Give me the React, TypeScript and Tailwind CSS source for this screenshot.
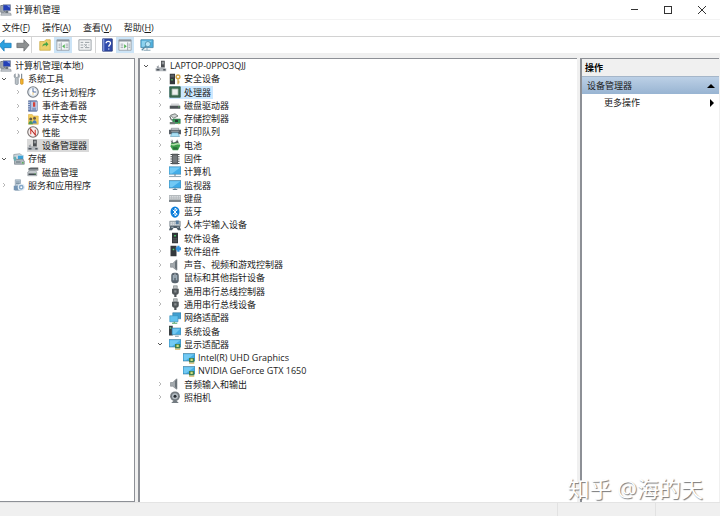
import React from "react";

type IconName =
  | "app" | "tools" | "clock" | "event" | "share" | "perf" | "pc" | "storage" | "drive" | "services"
  | "security" | "cpu" | "disk" | "controller" | "printer" | "battery" | "firmware" | "computer"
  | "monitor" | "keyboard" | "bluetooth" | "hid" | "device" | "component" | "speaker" | "mouse"
  | "usb" | "network" | "system" | "display" | "camera";

const art: Record<IconName, React.ReactNode> = {
  app: (
    <>
      <path d="M1 2h5v9H1z" fill="#aeb4b9" stroke="#59636d" />
      <path d="M4 1h10v8H4z" fill="#2440b8" stroke="#8a929a" />
      <path d="M9 2h4v3z" fill="#8ba6f0" />
      <path d="M2 12h12l1 3H1z" fill="#c6cbd0" stroke="#757d85" strokeWidth=".7" />
      <path d="M7 9h4v3H7z" fill="#6a737c" />
    </>
  ),
  tools: (
    <>
      <path d="M3 1v4l2 1 2-1V1c2 1 2 5 0 6v7c0 2-4 2-4 0V7C1 6 1 2 3 1z" fill="#b9c1c7" stroke="#747e86" strokeWidth=".8" />
      <path d="M11.5 1v7" stroke="#7b858d" strokeWidth="1.5" />
      <path d="M10 8h3.500v6c0 1.500-3.500 1.500-3.500 0z" fill="#f1b32d" stroke="#c27f16" strokeWidth=".8" />
    </>
  ),
  clock: (
    <>
      <circle cx="8" cy="8" r="7" fill="#e3ebf3" stroke="#777e86" strokeWidth="1.5" />
      <circle cx="8" cy="8" r="5" fill="#fff" stroke="#c4cdd6" strokeWidth=".6" />
      <path d="M8 3v5h4" fill="none" stroke="#4a69a0" strokeWidth="1.3" />
      <path d="M8 8v4" stroke="#e2ba63" />
    </>
  ),
  event: (
    <>
      <path d="M2 1h11v14H2z" fill="#5d79b5" stroke="#4b5f8c" strokeWidth=".8" />
      <path d="M5 2h9v12H5z" fill="#b9c7e4" stroke="#7888ab" strokeWidth=".7" />
      <path d="M8 3h3v6H8z" fill="#d3423c" />
      <path d="M7 11h5M7 13h5" stroke="#6278a5" />
      <path d="M1 3h3M1 6h3M1 9h3M1 12h3" stroke="#e8edf3" />
    </>
  ),
  share: (
    <>
      <path d="M2 2h5l1 2h7v11H2z" fill="#f3ce5b" stroke="#d6a63a" strokeWidth=".7" />
      <circle cx="5" cy="8" r="2" fill="#635c48" />
      <circle cx="10" cy="7" r="2" fill="#705c42" />
      <path d="M2 15c0-6 6-6 6 0z" fill="#4c9a57" />
      <path d="M7 14c0-6 6-6 6 0z" fill="#497fb9" />
    </>
  ),
  perf: (
    <>
      <circle cx="8" cy="8" r="7" fill="#f7eeee" stroke="#77716f" strokeWidth="1.5" />
      <path d="M5 11V4l6 8V5" fill="none" stroke="#d9463e" strokeWidth="1.5" />
      <path d="M4 4l8 8" stroke="#812923" strokeWidth=".7" />
    </>
  ),
  pc: (
    <>
      <path d="M8 1h5v9H8z" fill="#4b4e52" />
      <path d="M9 3h3M9 5h3" stroke="#ccd0d4" />
      <path d="M2 9l3-2v3h8v2H3v2H1v-3h2z" fill="#9a9fa5" />
      <path d="M1 11h14v4H1z" fill="#b4b9be" />
      <path d="M2 12h4v2H2zM11 12h3v2h-3z" fill="#4e555c" />
    </>
  ),
  storage: (
    <>
      <path d="M1 2l8-1 3 2v5H1z" fill="#c9d4da" stroke="#7b8991" strokeWidth=".8" />
      <path d="M6 3h8v6H6z" fill="#3aa3d9" stroke="#d8e0e5" />
      <path d="M2 9l11-1 2 3v4H2z" fill="#aeb7bd" stroke="#65727b" strokeWidth=".8" />
      <path d="M4 12h6" stroke="#4e5d66" />
      <path d="M12 12h2v2h-2z" fill="#57b854" />
      <path d="M1 5h3v5H1z" fill="#66aeb3" />
    </>
  ),
  drive: (
    <>
      <path d="M2 3l3-1h10v4H2z" fill="#5a6065" />
      <path d="M3 5h12" stroke="#a9b0b5" />
      <path d="M1 8l3-2h7l2 2v5H1z" fill="#c3c8cc" stroke="#7d848a" strokeWidth=".7" />
      <path d="M2 10h10v2H2z" fill="#41484e" />
      <path d="M10 10h2v1h-2z" fill="#6cc367" />
    </>
  ),
  services: (
    <>
      <path d="M3 1h7v14H3z" fill="#b9c9d6" stroke="#8698a7" strokeWidth=".8" />
      <path d="M4 4h5M4 6h5" stroke="#6d8497" />
      <path d="M1 9h9v6H1z" fill="#7495b5" />
      <circle cx="11" cy="11" r="4" fill="#82a6c8" stroke="#e3edf5" strokeWidth="1.5" />
      <circle cx="11" cy="11" r="1.3" fill="#fff" />
    </>
  ),
  security: (
    <>
      <path d="M1 1h7v14H1z" fill="#34383b" />
      <path d="M2 3h5M2 5h5" stroke="#767c80" />
      <path d="M3 8h2v2H3z" fill="#55b75b" />
      <circle cx="12" cy="5" r="2.5" fill="none" stroke="#d3a646" strokeWidth="2" />
      <path d="M12 7v8M12 11h2M12 13h2" stroke="#d3a646" strokeWidth="1.5" />
    </>
  ),
  cpu: (
    <>
      <path d="M1 1h14v14H1z" fill="#3e6d52" stroke="#29553c" />
      <path d="M4 4h8v8H4z" fill="#eef1ef" stroke="#a3b8aa" />
    </>
  ),
  disk: (
    <>
      <path d="M3 6h10l2 4H1z" fill="#d5d7d9" />
      <path d="M1 9h14v4H1z" fill="#4d5256" />
      <path d="M12 10h2v1h-2z" fill="#62c564" />
    </>
  ),
  controller: (
    <>
      <path d="M2 3l6-2 4 3-6 3z" fill="#d0d4d4" stroke="#555f5b" />
      <path d="M1 4l2 5 5 1" fill="none" stroke="#626c67" strokeWidth="1.5" />
      <path d="M5 8h10v6H5z" fill="#369957" stroke="#246c3f" strokeWidth=".7" />
      <path d="M8 9h4v3H8z" fill="#293c31" />
      <path d="M1 12h7v3H1z" fill="#737a77" />
      <path d="M12 14h2v1h-2z" fill="#dcb546" />
    </>
  ),
  printer: (
    <>
      <path d="M3 3h10v3H3z" fill="#d6dadd" stroke="#656d73" strokeWidth=".7" />
      <path d="M0 5h16v6H0z" fill="#565e65" />
      <path d="M3 7h10" stroke="#b4bdc3" />
      <path d="M4 9h8l2 5H2z" fill="#a8dff4" stroke="#4f8ca8" strokeWidth=".7" />
    </>
  ),
  battery: (
    <>
      <path d="M2 2l4 3 6-3 1 4H4z" fill="#52595b" />
      <path d="M3 5h10l2 4-3 6H5l-3-5z" fill="#3c9c4b" />
      <path d="M3 7c4 3 7-3 11 0" fill="none" stroke="#b3dfaa" strokeWidth="2" />
      <path d="M4 1l1 5M11 1l-1 4" stroke="#596466" />
      <path d="M5 11h6l1 3H6z" fill="#286d38" />
    </>
  ),
  firmware: (
    <>
      <path d="M4 1h8v14H4z" fill="#54575a" />
      <path d="M5 3h6v10H5z" fill="#74787b" />
      <path d="M2 2h2M2 5h2M2 8h2M2 11h2M2 14h2M12 2h2M12 5h2M12 8h2M12 11h2M12 14h2" stroke="#45494c" strokeWidth="1.5" />
    </>
  ),
  computer: (
    <>
      <path d="M0 1h16v10H0z" fill="#43aee9" stroke="#4c8aad" strokeWidth=".8" />
      <path d="M1 2h14L4 10H1z" fill="#75cbf6" />
      <path d="M7 11h2v2H7z" fill="#718897" />
      <path d="M0 14h16" stroke="#93a9b7" strokeWidth="1.5" />
    </>
  ),
  monitor: (
    <>
      <path d="M0 2h16v10H0z" fill="#40abe7" stroke="#477e9b" strokeWidth=".8" />
      <path d="M1 3h14L4 11H1z" fill="#72c9f4" />
      <path d="M5 14h6M8 12v2" stroke="#597d92" strokeWidth="1.3" />
    </>
  ),
  keyboard: (
    <>
      <path d="M0 4h16v9H0z" fill="#b5babd" />
      <path d="M1 6h14M1 8h14" stroke="#e4e7e9" strokeDasharray="2 1" />
      <path d="M0 12h16" stroke="#697076" strokeWidth="2" />
    </>
  ),
  bluetooth: (
    <>
      <ellipse cx="8" cy="8" rx="6" ry="7.5" fill="#087cda" />
      <path d="M5 5l6 6-3 2V3l3 2-6 6" fill="none" stroke="#fff" strokeWidth="1.3" />
    </>
  ),
  hid: (
    <>
      <path d="M1 3h14v7H1z" fill="#b3bbc0" stroke="#69747c" strokeWidth=".8" />
      <path d="M2 5h12M2 7h12" stroke="#f1f3f4" strokeDasharray="2 1" />
      <path d="M9 2h4v5H9z" fill="#597c9d" />
      <path d="M2 9h12l2 6h-4l-2-3H6l-2 3H0z" fill="#4c5a65" />
      <path d="M3 11h3M11 11h2" stroke="#d4e1eb" />
    </>
  ),
  device: (
    <>
      <path d="M4 1h8v14H4z" fill="#303438" />
      <path d="M5 9h6M5 11h6M5 13h6" stroke="#74797d" strokeWidth=".7" />
      <path d="M7 4h2v2H7z" fill="#49df69" />
    </>
  ),
  component: (
    <>
      <path d="M2 1h8v14H2z" fill="#34383c" />
      <path d="M5 5h2v2H5z" fill="#52d56c" />
      <path d="M9 3h2V1h3v2h2v4h-2v2h-3V7H9z" fill="#3492dc" />
    </>
  ),
  speaker: (
    <>
      <path d="M2 6h3l5-5v14l-5-4H2z" fill="#a3a9ad" stroke="#7b8287" strokeWidth=".8" />
      <path d="M8 4l3-3v14l-3-3z" fill="#6b7379" />
    </>
  ),
  mouse: (
    <>
      <rect x="3" y="1" width="10" height="14" rx="4" fill="#59646e" />
      <path d="M5 4h2v7H5zM9 4h2v7H9z" fill="#9aabb8" />
      <path d="M8 2v6" stroke="#e0e9ef" />
    </>
  ),
  usb: (
    <>
      <path d="M6 1h5v4H6z" fill="#bdc1c3" stroke="#666c6f" strokeWidth=".7" />
      <path d="M4 5h9v5c0 2-2 3-3 3v3H7v-3c-1 0-3-1-3-3z" fill="#505659" />
      <path d="M7 7h3v3H7z" fill="#898f92" />
    </>
  ),
  network: (
    <>
      <path d="M5 1h11v8H5z" fill="#409fd1" stroke="#357b9f" strokeWidth=".8" />
      <path d="M1 5h11v8H1z" fill="#61c1ee" stroke="#378eb8" strokeWidth=".8" />
      <path d="M4 15h7M7 13v2" stroke="#54a76a" strokeWidth="1.5" />
    </>
  ),
  system: (
    <>
      <path d="M0 1h5v13H0z" fill="#393e43" />
      <path d="M4 4h12v9H4z" fill="#43ace3" stroke="#457d99" strokeWidth=".8" />
      <path d="M5 5h10l-7 7H5z" fill="#72c8f1" />
      <path d="M8 15h5" stroke="#607e8e" />
      <path d="M1 3h2v2H1z" fill="#61cd7c" />
    </>
  ),
  display: (
    <>
      <path d="M0 2h16v10H0z" fill="#43ade5" stroke="#447a94" strokeWidth=".8" />
      <path d="M1 3h14L4 11H1z" fill="#73caf3" />
      <path d="M8 8h7v6H8z" fill="#407e4c" />
      <path d="M10 9h3v3h-3z" fill="#d2dd80" />
      <path d="M8 15h7" stroke="#ca9f2d" />
    </>
  ),
  camera: (
    <>
      <circle cx="8" cy="7" r="6.5" fill="#747b80" />
      <circle cx="8" cy="7" r="4" fill="#b5bdc3" />
      <circle cx="8" cy="7" r="2" fill="#252b30" />
      <path d="M3 16l3-3h4l3 3z" fill="#737b81" />
    </>
  ),
};

function Icon({ name }: { name: IconName }) {
  return (
    <svg viewBox="0 0 16 16" className="h-3 w-3 shrink-0" aria-hidden="true">
      {art[name]}
    </svg>
  );
}

function Chevron({ open }: { open?: boolean }) {
  return (
    <svg viewBox="0 0 6 6" className="h-1.5 w-1.5 shrink-0" fill="none" aria-hidden="true">
      {open === undefined ? null : open ? (
        <path d="M1 2l2 2 2-2" stroke="#555" />
      ) : (
        <path d="M2 1l2 2-2 2" stroke="#a6a6a6" strokeWidth=".8" />
      )}
    </svg>
  );
}

type Node = { label: string; icon: IconName; level: number; open?: boolean; tone?: "grey" | "blue" };

const consoleTree: Node[] = [
  { label: "计算机管理(本地)", icon: "app", level: 0 },
  { label: "系统工具", icon: "tools", level: 1, open: true },
  { label: "任务计划程序", icon: "clock", level: 2, open: false },
  { label: "事件查看器", icon: "event", level: 2, open: false },
  { label: "共享文件夹", icon: "share", level: 2, open: false },
  { label: "性能", icon: "perf", level: 2, open: false },
  { label: "设备管理器", icon: "pc", level: 2, tone: "grey" },
  { label: "存储", icon: "storage", level: 1, open: true },
  { label: "磁盘管理", icon: "drive", level: 2 },
  { label: "服务和应用程序", icon: "services", level: 1, open: false },
];

const deviceTree: Node[] = [
  { label: "LAPTOP-0PPO3QJJ", icon: "pc", level: 1, open: true },
  { label: "安全设备", icon: "security", level: 2, open: false },
  { label: "处理器", icon: "cpu", level: 2, open: false, tone: "blue" },
  { label: "磁盘驱动器", icon: "disk", level: 2, open: false },
  { label: "存储控制器", icon: "controller", level: 2, open: false },
  { label: "打印队列", icon: "printer", level: 2, open: false },
  { label: "电池", icon: "battery", level: 2, open: false },
  { label: "固件", icon: "firmware", level: 2, open: false },
  { label: "计算机", icon: "computer", level: 2, open: false },
  { label: "监视器", icon: "monitor", level: 2, open: false },
  { label: "键盘", icon: "keyboard", level: 2, open: false },
  { label: "蓝牙", icon: "bluetooth", level: 2, open: false },
  { label: "人体学输入设备", icon: "hid", level: 2, open: false },
  { label: "软件设备", icon: "device", level: 2, open: false },
  { label: "软件组件", icon: "component", level: 2, open: false },
  { label: "声音、视频和游戏控制器", icon: "speaker", level: 2, open: false },
  { label: "鼠标和其他指针设备", icon: "mouse", level: 2, open: false },
  { label: "通用串行总线控制器", icon: "usb", level: 2, open: false },
  { label: "通用串行总线设备", icon: "usb", level: 2, open: false },
  { label: "网络适配器", icon: "network", level: 2, open: false },
  { label: "系统设备", icon: "system", level: 2, open: false },
  { label: "显示适配器", icon: "display", level: 2, open: true },
  { label: "Intel(R) UHD Graphics", icon: "display", level: 3 },
  { label: "NVIDIA GeForce GTX 1650", icon: "display", level: 3 },
  { label: "音频输入和输出", icon: "speaker", level: 2, open: false },
  { label: "照相机", icon: "camera", level: 2, open: false },
];

const indent = ["-ml-3", "pl-px", "pl-[15px]", "pl-[29px]"];

function Tree({ nodes, label, className }: { nodes: Node[]; label: string; className: string }) {
  return (
    <ul role="tree" aria-label={label} className={"grid auto-rows-fr " + className}>
      {nodes.map((n) => (
        <li
          key={n.label}
          role="treeitem"
          aria-level={n.level + 1}
          aria-expanded={n.open}
          className={"flex min-h-0 items-center " + indent[n.level]}
        >
          <button type="button" className="flex h-[13px] items-center whitespace-nowrap">
            <Chevron open={n.open} />
            <span
              className={
                "ml-1.5 flex h-[13px] items-center gap-0.5 pr-0.5 " +
                (n.tone === "grey" ? "bg-[#d9d9d9]" : n.tone === "blue" ? "bg-[#cce8ff]" : "")
              }
            >
              <Icon name={n.icon} />
              <span className="pl-px leading-[13px]">{n.label}</span>
            </span>
          </button>
        </li>
      ))}
    </ul>
  );
}

const menus = [
  { label: "文件", mnemonic: "F" },
  { label: "操作", mnemonic: "A" },
  { label: "查看", mnemonic: "V" },
  { label: "帮助", mnemonic: "H" },
];

function ToolButton({ label, active, children }: { label: string; active?: boolean; children: React.ReactNode }) {
  return (
    <button
      type="button"
      aria-label={label}
      className={"flex h-4 w-[18px] items-center justify-center " + (active ? "bg-[#cce4f7]" : "")}
    >
      <svg viewBox="0 0 16 16" className="h-3.5 w-3.5" aria-hidden="true">
        {children}
      </svg>
    </button>
  );
}

function Divider() {
  return <span className="block h-4 w-px bg-[#d5d5d5]" />;
}

export default function App() {
  return (
    <div className="flex h-screen flex-col overflow-hidden bg-[#f0f0f0] font-['Open_Sans','Noto_Sans_CJK_SC',sans-serif] text-[9px] text-[#1c1c1c]">
      <header className="flex h-[19px] shrink-0 items-center bg-white pr-2.5">
        <Icon name="app" />
        <h1 className="ml-[3px] flex-1">计算机管理</h1>
        <div className="flex gap-[18px]">
          <button type="button" aria-label="最小化" className="flex h-4 w-4 items-center justify-center">
            <span className="h-px w-[7px] bg-[#333]" />
          </button>
          <button type="button" aria-label="最大化" className="flex h-4 w-4 items-center justify-center">
            <span className="h-2 w-2 border border-[#333]" />
          </button>
          <button type="button" aria-label="关闭" className="flex h-4 w-4 items-center justify-center">
            <svg viewBox="0 0 8 8" className="h-2 w-2" aria-hidden="true">
              <path d="M0 0l8 8M8 0L0 8" stroke="#333" />
            </svg>
          </button>
        </div>
      </header>

      <nav aria-label="菜单" className="flex h-[18px] shrink-0 items-center gap-3 border-t border-b border-t-[#f3f3f3] border-b-[#d2d2d2] bg-white pl-0.5">
        {menus.map((m) => (
          <button key={m.label} type="button" className="whitespace-nowrap">
            {m.label}(<u>{m.mnemonic}</u>)
          </button>
        ))}
      </nav>

      <div role="toolbar" aria-label="工具栏" className="flex h-4 shrink-0 items-center bg-white">
        <div className="-ml-1 flex">
          <ToolButton label="后退">
            <path d="M1 8l6-6v4h8v5H7v4z" fill="#2ba0df" stroke="#1577b6" strokeWidth=".8" />
          </ToolButton>
          <ToolButton label="前进">
            <path d="M15 8L9 2v4H1v5h8v4z" fill="#8d9091" stroke="#65696b" strokeWidth=".8" />
          </ToolButton>
        </div>
        <div className="mr-1 -ml-px"><Divider /></div>
        <ToolButton label="上一级">
          <path d="M2 4h5l2-2h5v12H2z" fill="#ecd06b" stroke="#c7a63d" strokeWidth=".8" />
          <path d="M5 10c0-3 2-4 4-4V4l3 3-3 3V8c-2 0-3 1-4 2z" fill="#46a548" />
        </ToolButton>
        <ToolButton label="显示/隐藏控制台树" active>
          <path d="M1 2h14v12H1z" fill="#f4f7f9" stroke="#98a0a7" />
          <path d="M1 3h14" stroke="#8c959d" strokeWidth="2" />
          <path d="M3 7h2M3 9h2M3 11h2M11 7h3M11 9h3M11 11h3" stroke="#9ba3a9" />
          <path d="M6 5v9" stroke="#98a0a7" />
          <path d="M10 7v5L7 9.500z" fill="#54b456" />
        </ToolButton>
        <div className="ml-1">
          <ToolButton label="属性">
            <path d="M1 2h14v12H1z" fill="#f1f2f3" stroke="#969da2" />
            <path d="M3 5h3M3 8h3M3 11h3M8 5h5M8 8h2M12 8h1M8 11h5" stroke="#8e969c" />
            <path d="M7 7l3 3M10 7l-3 3" stroke="#a5abb0" />
          </ToolButton>
        </div>
        <div className="mr-0.5 ml-px"><Divider /></div>
        <ToolButton label="帮助">
          <path d="M3 1h11v14H3z" fill="#304bad" stroke="#263978" />
          <path d="M3 1h2v14H3z" fill="#7e94da" />
          <path d="M7 6c0-3 5-3 5 0 0 2-2 2-2 4M10 12v1" stroke="#fff" strokeWidth="1.5" fill="none" />
        </ToolButton>
        <ToolButton label="显示/隐藏操作窗格" active>
          <path d="M1 2h14v12H1z" fill="#f4f7f9" stroke="#98a0a7" />
          <path d="M1 3h14" stroke="#8c959d" strokeWidth="2" />
          <path d="M3 7h3M3 9h3M3 11h3M12 7h2M12 9h2M12 11h2" stroke="#9ba3a9" />
          <path d="M11 5v9" stroke="#98a0a7" />
          <path d="M7 7v5l3-2.500z" fill="#54b456" />
        </ToolButton>
        <div className="ml-1">
          <ToolButton label="扫描检测硬件改动">
            <path d="M1 2h14v9H1z" fill="#4fb0de" stroke="#4e8cad" />
            <path d="M2 3h12L5 10H2z" fill="#8dd2ee" />
            <path d="M8 11v3M4 14h8" stroke="#789aac" />
            <circle cx="9" cy="7" r="3" fill="#bae6f6" stroke="#4d8fad" />
            <path d="M7 9l-5 5" stroke="#5b8da5" strokeWidth="1.5" />
          </ToolButton>
        </div>
      </div>

      <main className="flex min-h-0 flex-1 gap-[3px] pt-[5px] pr-px">
        <section className="w-[135px] shrink-0 overflow-hidden border-t border-r border-b border-[#8d9096] bg-white">
          <Tree nodes={consoleTree} label="控制台树" className="h-[133px]" />
        </section>
        <section className="min-w-0 flex-1 overflow-hidden border-t border-l-2 border-[#8d9096] bg-white">
          <Tree nodes={deviceTree} label="设备" className="ml-0.5 h-[345px]" />
        </section>
        <aside className="relative w-[139px] shrink-0 border-t border-l-2 border-[#8d9096] bg-white">
          <h2 className="flex h-[17px] items-center bg-[#f0f0f0] pl-[3px] font-bold text-black">操作</h2>
          <button type="button" className="flex h-[18px] w-full items-center justify-between border-t border-[#a5b6c9] bg-linear-to-b from-[#bcd0e6] to-[#98b4d2] pr-1 pl-[5px]">
            <span>设备管理器</span>
            <svg viewBox="0 0 8 4" className="h-1 w-2" aria-hidden="true"><path d="M4 0l4 4H0z" /></svg>
          </button>
          <button type="button" className="flex h-[18px] w-full items-center justify-between pr-[5px] pl-[22px]">
            <span>更多操作</span>
            <svg viewBox="0 0 4 8" className="h-2 w-1" aria-hidden="true"><path d="M0 0l4 4-4 4z" /></svg>
          </button>
          <p className="absolute right-4 bottom-0 text-[22px] leading-7 whitespace-nowrap text-white [text-shadow:1px_1px_1px_#777]">
            知乎 @海的天
          </p>
        </aside>
      </main>

      <footer className="flex h-3.5 shrink-0 border-t border-[#e4e4e4]">
        <div className="flex-1 border-r border-[#e2e2e2]" />
        <div className="w-[98px] border-r border-[#e2e2e2]" />
        <div className="w-16" />
      </footer>
    </div>
  );
}
